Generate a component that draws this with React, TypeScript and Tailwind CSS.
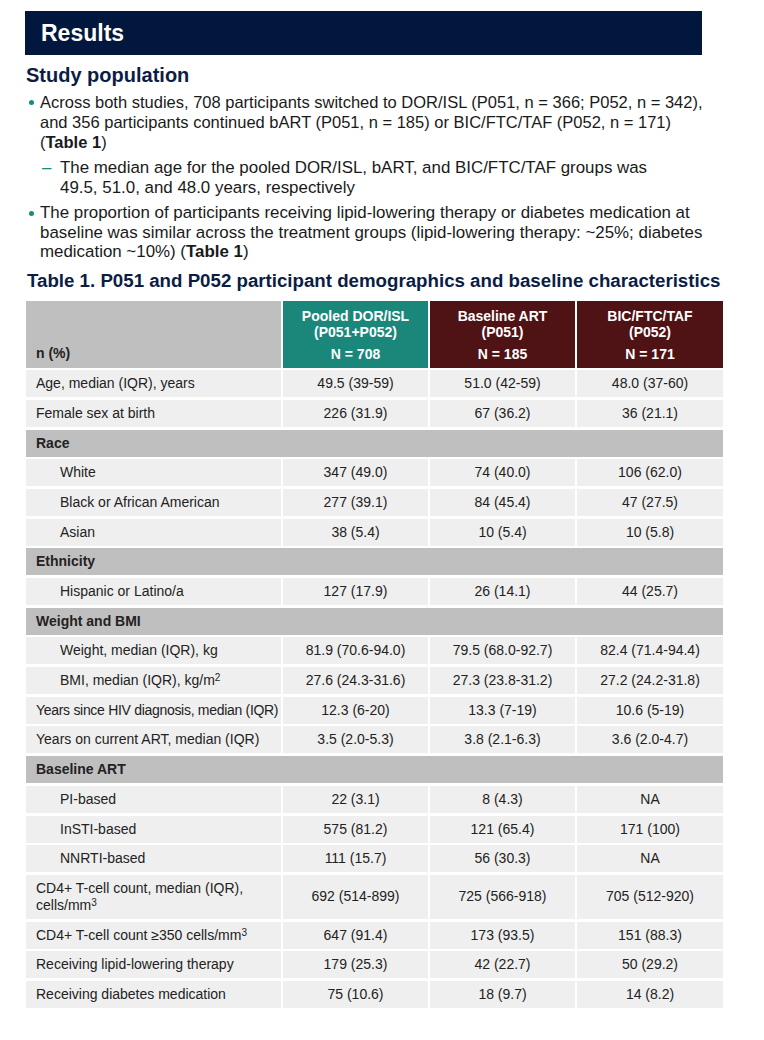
import React from "react";

type Row =
  | { kind: "row"; label: React.ReactNode; v: string[]; indent?: boolean; tall?: boolean; tight?: boolean }
  | { kind: "section"; label: string };

const Sup = ({ children }: { children: React.ReactNode }) => (
  <span className="text-[10px] leading-none relative top-[-4px]">{children}</span>
);

const rows: Row[] = [
  { kind: "row", label: "Age, median (IQR), years", v: ["49.5 (39-59)", "51.0 (42-59)", "48.0 (37-60)"] },
  { kind: "row", label: "Female sex at birth", v: ["226 (31.9)", "67 (36.2)", "36 (21.1)"] },
  { kind: "section", label: "Race" },
  { kind: "row", label: "White", indent: true, v: ["347 (49.0)", "74 (40.0)", "106 (62.0)"] },
  { kind: "row", label: "Black or African American", indent: true, v: ["277 (39.1)", "84 (45.4)", "47 (27.5)"] },
  { kind: "row", label: "Asian", indent: true, v: ["38 (5.4)", "10 (5.4)", "10 (5.8)"] },
  { kind: "section", label: "Ethnicity" },
  { kind: "row", label: "Hispanic or Latino/a", indent: true, v: ["127 (17.9)", "26 (14.1)", "44 (25.7)"] },
  { kind: "section", label: "Weight and BMI" },
  { kind: "row", label: "Weight, median (IQR), kg", indent: true, v: ["81.9 (70.6-94.0)", "79.5 (68.0-92.7)", "82.4 (71.4-94.4)"] },
  {
    kind: "row",
    label: (
      <>
        BMI, median (IQR), kg/m<Sup>2</Sup>
      </>
    ),
    indent: true,
    v: ["27.6 (24.3-31.6)", "27.3 (23.8-31.2)", "27.2 (24.2-31.8)"],
  },
  {
    kind: "row",
    tight: true,
    label: "Years since HIV diagnosis, median (IQR)",
    v: ["12.3 (6-20)", "13.3 (7-19)", "10.6 (5-19)"],
  },
  { kind: "row", label: "Years on current ART, median (IQR)", v: ["3.5 (2.0-5.3)", "3.8 (2.1-6.3)", "3.6 (2.0-4.7)"] },
  { kind: "section", label: "Baseline ART" },
  { kind: "row", label: "PI-based", indent: true, v: ["22 (3.1)", "8 (4.3)", "NA"] },
  { kind: "row", label: "InSTI-based", indent: true, v: ["575 (81.2)", "121 (65.4)", "171 (100)"] },
  { kind: "row", label: "NNRTI-based", indent: true, v: ["111 (15.7)", "56 (30.3)", "NA"] },
  {
    kind: "row",
    tall: true,
    label: (
      <>
        CD4+ T-cell count, median (IQR),
        <br />
        cells/mm<Sup>3</Sup>
      </>
    ),
    v: ["692 (514-899)", "725 (566-918)", "705 (512-920)"],
  },
  {
    kind: "row",
    label: (
      <>
        CD4+ T-cell count ≥350 cells/mm<Sup>3</Sup>
      </>
    ),
    v: ["647 (91.4)", "173 (93.5)", "151 (88.3)"],
  },
  { kind: "row", label: "Receiving lipid-lowering therapy", v: ["179 (25.3)", "42 (22.7)", "50 (29.2)"] },
  { kind: "row", label: "Receiving diabetes medication", v: ["75 (10.6)", "18 (9.7)", "14 (8.2)"] },
];

export default function App() {
  return (
    <div
      className="w-[764px] h-[1040px] bg-white text-[#1a1a1a]"
      style={{ fontFamily: '"Liberation Sans", Arial, sans-serif' }}
    >
      <div className="pt-[11px] pl-[25px]">
        <div className="w-[677px] h-[44px] bg-[#02173d] flex items-center pl-[16px]">
          <span className="text-white font-bold text-[23px] leading-none">Results</span>
        </div>
      </div>

      <div className="pl-[26px] mt-[8px]">
        <h2 className="text-[#0c1d45] font-bold text-[20px] leading-[24px]">Study population</h2>
      </div>

      <div className="mt-[5px] pl-[29px] leading-[20px] whitespace-nowrap">
        <div className="flex text-[16.5px]">
          <div className="w-[11px] shrink-0 pt-[8px]">
            <div className="w-[5px] h-[5px] rounded-full bg-[#1a8a7a]" />
          </div>
          <p>
            Across both studies, 708 participants switched to DOR/ISL (P051, n = 366; P052, n = 342),
            <br />
            and 356 participants continued bART (P051, n = 185) or BIC/FTC/TAF (P052, n = 171)
            <br />
            (<b>Table 1</b>)
          </p>
        </div>
        <div className="flex mt-[6px] pl-[13px] text-[16.9px] leading-[19.5px]">
          <div className="w-[18px] shrink-0 text-[#1a8a7a]">–</div>
          <p>
            The median age for the pooled DOR/ISL, bART, and BIC/FTC/TAF groups was
            <br />
            49.5, 51.0, and 48.0 years, respectively
          </p>
        </div>
        <div className="flex mt-[6px] text-[16.9px] leading-[19.5px]">
          <div className="w-[11px] shrink-0 pt-[8px]">
            <div className="w-[5px] h-[5px] rounded-full bg-[#1a8a7a]" />
          </div>
          <p>
            The proportion of participants receiving lipid-lowering therapy or diabetes medication at
            <br />
            baseline was similar across the treatment groups (lipid-lowering therapy: ~25%; diabetes
            <br />
            medication ~10%) (<b>Table 1</b>)
          </p>
        </div>
      </div>

      <div className="pl-[27px] mt-[8px]">
        <h3 className="text-[#0c1d45] font-bold text-[18.7px] leading-[22px] whitespace-nowrap">
          Table 1. P051 and P052 participant demographics and baseline characteristics
        </h3>
      </div>

      <div className="pl-[26px] mt-[9px]">
        <div className="grid grid-cols-[255px_145px_145px_146px] gap-x-[2px] gap-y-[2.7px] text-[14px] leading-[17px] text-[#222]">
          <div className="h-[67px] bg-[#c0bfbf] flex items-end pl-[10px] pb-[6px] font-bold">n (%)</div>
          <HeadCell bg="bg-[#1b877a]" l1="Pooled DOR/ISL" l2="(P051+P052)" n="N = 708" />
          <HeadCell bg="bg-[#4f1215]" l1="Baseline ART" l2="(P051)" n="N = 185" />
          <HeadCell bg="bg-[#4f1215]" l1="BIC/FTC/TAF" l2="(P052)" n="N = 171" />

          {rows.map((r, i) =>
            r.kind === "section" ? (
              <div key={i} className="col-span-4 h-[27px] bg-[#c0bfbf] flex items-center pl-[10px] font-bold">
                {r.label}
              </div>
            ) : (
              <React.Fragment key={i}>
                <div
                  className={`${r.tall ? "h-[44px]" : "h-[27px]"} bg-[#efefef] flex items-center whitespace-nowrap ${
                    r.indent ? "pl-[34px]" : "pl-[10px]"
                  } ${r.tight ? "tracking-[-0.3px]" : ""}`}
                >
                  <span>{r.label}</span>
                </div>
                {r.v.map((v, j) => (
                  <div
                    key={j}
                    className={`${r.tall ? "h-[44px]" : "h-[27px]"} bg-[#efefef] flex items-center justify-center`}
                  >
                    {v}
                  </div>
                ))}
              </React.Fragment>
            )
          )}
        </div>
      </div>
    </div>
  );
}

function HeadCell({ bg, l1, l2, n }: { bg: string; l1: string; l2: string; n: string }) {
  return (
    <div className={`h-[67px] ${bg} text-white font-bold flex flex-col items-center pt-[7px] leading-[16px]`}>
      <span>{l1}</span>
      <span>{l2}</span>
      <span className="mt-[6px]">{n}</span>
    </div>
  );
}
